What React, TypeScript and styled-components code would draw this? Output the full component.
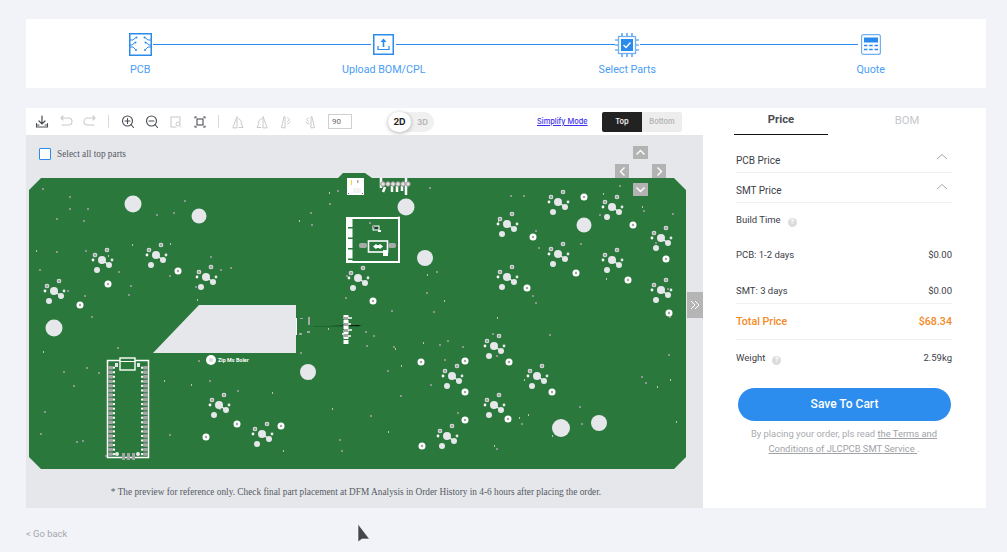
import React from "react";
import styled, { createGlobalStyle } from "styled-components";

const Global = createGlobalStyle`
  html, body { margin: 0; padding: 0; background: #f1f3f8; }
  body { font-family: Roboto, "Liberation Sans", sans-serif; overflow: hidden; }
  * { box-sizing: border-box; }
`;

const Page = styled.div`
  position: relative;
  width: 1007px;
  height: 552px;
  padding: 19px 21px 0 26px;
`;
const StepsCard = styled.div`
  height: 69px;
  background: #fff;
  display: grid;
  grid-template-columns: repeat(4, 243.5px);
  justify-content: center;
  padding-right: 1px;
  margin-bottom: 20px;
`;
const Step = styled.div<{ $last?: boolean }>`
  position: relative;
  display: flex;
  flex-direction: column;
  align-items: center;
  padding-top: 14px;
  &::before {
    content: "";
    display: ${(p) => (p.$last ? "none" : "block")};
    position: absolute;
    left: 50%;
    top: 25px;
    width: 243.5px;
    height: 1px;
    background: #2b8bec;
  }
`;
const StepIcon = styled.div`
  position: relative;
  z-index: 1;
  width: 25px;
  height: 23px;
  background: #fff;
  display: flex;
  align-items: center;
  justify-content: center;
`;
const StepLabel = styled.div`
  margin-top: 7px;
  font-size: 10.7px;
  line-height: 14px;
  color: #4a9df5;
`;
const Main = styled.div`
  display: flex;
  height: 400px;
`;
const Left = styled.div`
  width: 677px;
  display: flex;
  flex-direction: column;
`;
const Toolbar = styled.div`
  height: 27px;
  background: #fff;
  display: flex;
  align-items: center;
  padding-left: 4px;
`;
const ToolBtn = styled.div`
  width: 24px;
  flex: none;
  height: 16px;
  display: flex;
  align-items: center;
  justify-content: center;
`;
const ToolSep = styled.div`
  width: 1px;
  height: 13px;
  background: #d9d9d9;
  margin: 0 7px 0 6px;
  flex: none;
`;
const AngleInput = styled.div`
  width: 24px;
  height: 15px;
  margin-left: 6px;
  border: 1px solid #d0d0d0;
  font-size: 8px;
  line-height: 13px;
  padding-left: 3px;
  color: #666;
`;
const ViewToggle = styled.div`
  width: 46px;
  height: 20px;
  margin-left: 36px;
  border-radius: 10px;
  background: #f0f0f0;
  display: flex;
  align-items: center;
  font-family: Inter, sans-serif;
  font-weight: 700;
  font-size: 8px;
`;
const View2D = styled.div`
  width: 23px;
  height: 20px;
  border-radius: 10px;
  background: #fff;
  box-shadow: 0 1px 4px rgba(0, 0, 0, 0.3);
  color: #222;
  font-size: 9px;
  line-height: 20px;
  text-align: center;
`;
const View3D = styled.div`
  width: 23px;
  color: #b8b8b8;
  text-align: center;
`;
const SimplifyLink = styled.a`
  margin-left: 103px;
  width: 65px;
  font-family: Inter, sans-serif;
  font-weight: 500;
  font-size: 7.4px;
  color: #3a2fe8;
  text-decoration: underline;
  white-space: nowrap;
`;
const Side = styled.div`
  display: flex;
  height: 20px;
  border-radius: 2px;
  overflow: hidden;
  font-family: Inter, sans-serif;
  font-size: 7.4px;
  font-weight: 600;
  line-height: 20px;
  text-align: center;
`;
const SideBtn = styled.div<{ $on?: boolean }>`
  width: 40px;
  background: ${(p) => (p.$on ? "#222222" : "#ededed")};
  color: ${(p) => (p.$on ? "#eeeeee" : "#b5b5b5")};
`;
const Canvas = styled.div`
  position: relative;
  flex: 1;
  background: #e6e7eb;
  display: flex;
  flex-direction: column;
`;
const SelectRow = styled.div`
  height: 35px;
  display: flex;
  align-items: center;
  padding: 2px 0 0 13px;
  font-family: "Liberation Serif", serif;
  font-size: 9.3px;
  color: #555a63;
`;
const Check = styled.span`
  width: 12px;
  height: 12px;
  border: 1px solid #2b8bec;
  border-radius: 1px;
  background: #fff;
  margin-right: 6px;
`;
const BoardSvg = styled.svg`
  display: block;
  width: 677px;
  height: 300px;
  flex: none;
`;
const Note = styled.div`
  flex: 1;
  text-align: center;
  font-family: "Liberation Serif", serif;
  font-size: 9.3px;
  line-height: 14px;
  padding: 15px 17px 0 0;
  color: #555a63;
`;
const Arrow = styled.div<{ $x: number; $y: number; $w: number; $h: number }>`
  position: absolute;
  left: ${(p) => p.$x}px;
  top: ${(p) => p.$y}px;
  width: ${(p) => p.$w}px;
  height: ${(p) => p.$h}px;
  background: #b3b3b3;
  display: flex;
  align-items: center;
  justify-content: center;
`;
const Right = styled.div`
  position: relative;
  flex: 1;
  background: #fff;
  padding: 0 34px 0 33px;
`;
const Tabs = styled.div`
  display: flex;
  height: 27px;
  margin: 0 -34px 0 -2px;
`;
const Tab = styled.div<{ $on?: boolean }>`
  width: ${(p) => (p.$on ? "94px" : "158px")};
  text-align: center;
  height: ${(p) => (p.$on ? "27px" : "26px")};
  border-bottom: ${(p) => (p.$on ? "1px solid #111" : "none")};
  font-size: 11.3px;
  font-weight: ${(p) => (p.$on ? 700 : 400)};
  line-height: ${(p) => (p.$on ? "24px" : "26px")};
  color: ${(p) => (p.$on ? "#4a4d52" : "#c5c7ca")};
`;
const Row = styled.div<{ $h: number; $line?: boolean; $pt?: number }>`
  height: ${(p) => p.$h}px;
  padding-top: ${(p) => p.$pt ?? 0}px;
  display: flex;
  justify-content: space-between;
  align-items: flex-start;
  font-size: 9.5px;
  line-height: 14px;
  color: #3c4048;
  border-bottom: ${(p) => (p.$line ? "1px solid #eff0f3" : "none")};
`;
const AccordionRow = styled(Row)`
  font-size: 10px;
  svg {
    margin: -1px 4px 0 0;
  }
`;
const TotalRow = styled(Row)`
  font-size: 10.7px;
  font-weight: 500;
  color: #f58a26;
`;
const Help = styled.span`
  display: inline-block;
  width: 9px;
  height: 9px;
  margin-left: 7px;
  border-radius: 50%;
  background: #dcdcdc;
  color: #fff;
  font-size: 7px;
  font-weight: 700;
  line-height: 9px;
  text-align: center;
  vertical-align: -1px;
`;
const SaveBtn = styled.div`
  width: 213px;
  height: 33px;
  margin: 19px 0 0 2px;
  border-radius: 17px;
  background: #2d8dee;
  color: #fff;
  font-size: 12px;
  font-weight: 500;
  line-height: 33px;
  text-align: center;
`;
const Terms = styled.div`
  margin-top: 5px;
  text-align: center;
  font-size: 9.4px;
  line-height: 15px;
  color: #a9abaf;
  a {
    color: #a0a2a6;
    text-decoration: underline;
  }
`;
const Handle = styled.div`
  position: absolute;
  left: -16px;
  top: 184px;
  width: 16px;
  height: 26px;
  background: #b5b5b5;
  display: flex;
  align-items: center;
  justify-content: center;
`;
const Back = styled.div`
  margin-top: 20px;
  font-size: 9.4px;
  line-height: 12px;
  color: #a6a8ac;
`;
const Cursor = styled.svg`
  position: absolute;
  left: 356px;
  top: 522px;
`;

const B = "#2b8bec";
const PcbIcon = () => (
  <svg width="23" height="23" viewBox="0 0 23 23" fill="none" stroke={B} strokeWidth="1">
    <rect x=".75" y=".75" width="21.5" height="21.5" strokeWidth="1.5" />
    <path d="M1 7h3l3 -2.5M22 7h-3l-3 -2.5M1 14h3l3 3M22 14h-3l-3 3M1 12h2l3 -2.5M22 12h-2l-3 -2.5" />
    <g fill={B} stroke="none">
      <circle cx="7.5" cy="4.5" r="1" /><circle cx="15.5" cy="4.5" r="1" />
      <circle cx="7" cy="17" r="1" /><circle cx="16" cy="17" r="1" />
      <circle cx="6.5" cy="9.5" r="1" /><circle cx="16.5" cy="9.5" r="1" />
    </g>
  </svg>
);
const UploadIcon = () => (
  <svg width="21" height="21" viewBox="0 0 21 21" fill="none" stroke={B}>
    <rect x=".75" y=".75" width="19.5" height="19.5" strokeWidth="1.5" />
    <path d="M5 12v3.5h11V12" strokeWidth="1.2" />
    <path d="M10.5 13V7" strokeWidth="1.6" />
    <path d="M10.5 4.5L7.5 8h6z" fill={B} stroke="none" />
  </svg>
);
const ChipIcon = () => (
  <svg width="24" height="24" viewBox="0 0 24 24" fill="none">
    <rect x="3.5" y="3.5" width="17" height="17" stroke="#6fb0f3" strokeWidth="1.3" />
    <rect x="6" y="6" width="12" height="12" fill={B} />
    <path d="M8.5 12l2.5 2.5 4.5 -5" stroke="#fff" strokeWidth="1.3" />
    <path d="M7 0v3M12 0v3M17 0v3M7 21v3M12 21v3M17 21v3M0 7h3M0 12h3M0 17h3M21 7h3M21 12h3M21 17h3" stroke={B} strokeWidth="1.2" />
  </svg>
);
const CalcIcon = () => (
  <svg width="20" height="21" viewBox="0 0 20 21" fill="none">
    <rect x=".6" y=".6" width="18.8" height="19.8" rx="2" stroke="#6fb0f3" strokeWidth="1.2" />
    <rect x="3" y="3.5" width="14" height="5" fill={B} />
    <path d="M3 11.5h3.5M8.2 11.5h3.5M13.5 11.5h3.5M3 15.5h3.5M8.2 15.5h3.5M13.5 15.5h3.5" stroke={B} strokeWidth="1.4" />
  </svg>
);

const T = ({ children }: { children: React.ReactNode }) => (
  <svg width="16" height="14" viewBox="0 0 16 14" fill="none" strokeLinecap="round">{children}</svg>
);
const D = "#4a4d52";
const L = "#c9cacc";
const ToolIcons = {
  download: <T><path d="M8 1v7.5M5 6l3 3 3-3" stroke={D} strokeWidth="1.2" /><path d="M2.5 8.5v3.5h11V8.5M2.5 10h2.5M11 10h2.5" stroke={D} strokeWidth="1.1" /></T>,
  undo: <T><path d="M3 3h7.5a3.2 3.2 0 0 1 0 7H4M3 3l2-2M3 3l2 2" stroke={L} strokeWidth="1.1" /></T>,
  redo: <T><path d="M13 3H5.5a3.2 3.2 0 0 0 0 7H12M13 3l-2-2M13 3l-2 2" stroke={L} strokeWidth="1.1" /></T>,
  zoomIn: <T><circle cx="7.5" cy="6" r="5" stroke={D} strokeWidth="1.1" /><path d="M5 6h5M7.5 3.5v5M11 9.5l2.5 3" stroke={D} strokeWidth="1.1" /></T>,
  zoomOut: <T><circle cx="7.5" cy="6" r="5" stroke={D} strokeWidth="1.1" /><path d="M5 6h5M11 9.5l2.5 3" stroke={D} strokeWidth="1.1" /></T>,
  fit: <T><path d="M8 12H3V2h9v5" stroke={L} strokeWidth="1.1" /><circle cx="10" cy="9" r="2" stroke={L} /><path d="M11.5 10.5l1.5 1.5" stroke={L} /></T>,
  frame: <T><rect x="5" y="4" width="6" height="6" stroke={D} strokeWidth="1.1" /><path d="M3 3V2h1.5M11.5 2H13v1M13 11v1h-1.5M4.5 12H3v-1" stroke={D} strokeWidth="1.1" /></T>,
  rotA: <T><path d="M3 12.5L7 1.5v11zM9 12.5h4L11 8M8.5 3.5a7 7 0 0 1 3.5 4" stroke={L} /></T>,
  rotB: <T><path d="M13 12.5L9 1.5v11zM7 12.5H3L5 8M7.5 3.5a7 7 0 0 0-3.5 4" stroke={L} /></T>,
  mirA: <T><path d="M7 2v11L3.5 12.5 6 2zM9.5 3l2 1.5-2 2M9.5 9l2.5-2" stroke={L} /></T>,
  mirB: <T><path d="M9 2v11l3.5-.5L10 2zM6.5 3l-2 1.5 2 2M7 9a3 3 0 0 1-3-2" stroke={L} /></T>,
};

const Chev = ({ d }: { d: string }) => (
  <svg width="13" height="13" viewBox="0 0 13 13" fill="none" stroke="#fff" strokeWidth="1.4"><path d={d} /></svg>
);
const Up = () => (
  <svg width="12" height="8" viewBox="0 0 12 8" fill="none" stroke="#a8a8a8"><path d="M1 6l5-4.5L11 6" /></svg>
);

// ---------- PCB drawing data (page coordinates) ----------
const clusters: [number, number][] = [
  [558, 202], [612, 207], [507, 224], [661, 238], [558, 254], [612, 260], [507, 277], [661, 290],
  [102, 260], [156, 255], [54, 291], [206, 277], [358, 278],
  [219, 405], [262, 434], [452, 376], [494, 346], [537, 376], [494, 405], [447, 436],
];
const holes: [number, number, number][] = [
  [133, 204, 8.5], [199, 216, 7.5], [54, 328, 8.5], [406, 207, 8.5], [425, 258, 8], [584, 225, 7.5],
  [308, 372, 8], [561, 428, 9], [599, 423, 8],
];
const rings: [number, number][] = [
  [584, 197], [633, 225], [533, 237], [666, 259], [576, 273], [628, 280], [527, 288], [669, 313],
  [178, 271], [108, 284], [80, 305], [373, 301], [237, 424], [281, 426], [421, 362], [465, 361],
  [509, 362], [465, 392], [508, 419], [552, 392], [206, 437], [422, 446], [465, 420],
];
const dots: [number, number][] = (() => {
  const out: [number, number][] = [];
  let s = 17;
  const r = () => {
    s = (s * 16807) % 2147483647;
    return s / 2147483647;
  };
  while (out.length < 130) {
    const x = 36 + r() * 642;
    const y = 184 + r() * 278;
    if (y > 303 && y < 355 && x > 150 && x < 298) continue;
    if (x > 105 && x < 150 && y > 356 && y < 460) continue;
    out.push([Math.round(x), Math.round(y)]);
  }
  return out;
})();

const Cluster = ({ x, y }: { x: number; y: number }) => (
  <g transform={`translate(${x} ${y})`}>
    <path d="M0 0L7 5" stroke="#fff" strokeWidth="1.2" />
    <circle r="4" fill="#e6e7eb" />
    <circle cx="7" cy="5" r="3" fill="#e6e7eb" />
    <circle cx="-5" cy="10" r="3" fill="#e6e7eb" />
    <circle cx="5" cy="-10" r="2.3" fill="#e6e7eb" />
    <circle cx="5" cy="-10" r="1.5" fill="#a3a6a5" />
    <circle cx="-7" cy="-5" r="2.3" fill="#e6e7eb" />
    <circle cx="-7" cy="-5" r="1.5" fill="#a3a6a5" />
    <circle cx="-9" cy="0" r="1.4" fill="#fff" />
    <circle cx="10" cy="0" r="1.4" fill="#e6e7eb" />
  </g>
);

const pinRows = Array.from({ length: 20 }, (_, i) => 366 + i * 4.55);

const Board = () => (
  <BoardSvg viewBox="26 170 677 300">
    <path d="M41 178H338L343 173H365L372 178H674L686 190V457L674 469H41L29 457V190Z" fill="#2a783c" />
    {dots.map(([x, y], i) => (
      <rect key={i} x={x} y={y} width={i % 4 === 0 ? 1 : 2} height="2" fill={i % 4 === 0 ? "#b9c7b4" : "#8f9692"} />
    ))}
    <path d="M199 305H296V353H153Z" fill="#e6e7eb" />
    <path d="M296.5 318v17" stroke="#fff" />
    <path d="M313 326.5H358L362 325" stroke="#1d6630" strokeWidth="1" />
    {holes.map(([x, y, r], i) => <circle key={i} cx={x} cy={y} r={r} fill="#e6e7eb" />)}
    {clusters.map(([x, y], i) => <Cluster key={i} x={x} y={y} />)}
    {rings.map(([x, y], i) => (
      <g key={i}>
        <circle cx={x} cy={y} r="3.5" fill="#fff" />
        <circle cx={x} cy={y} r="1.2" fill="#9fa5a2" />
      </g>
    ))}

    {/* USB connector */}
    <rect x="347" y="178" width="17" height="17" fill="#fff" />
    <rect x="351" y="180" width="1" height="5" fill="#e8d83a" />
    <rect x="357" y="180" width="1.5" height="3" fill="#aaa" />
    <rect x="353" y="188" width="8" height="5" fill="#f2f2ee" />
    <rect x="348" y="193" width="1" height="1" fill="#e020d0" />
    <rect x="362" y="193" width="1" height="1" fill="#e020d0" />
    {/* header */}
    <path d="M381 178v10M385 187l-2 5M392 186v6M397 186v6M402 186v5M406 178v17" stroke="#fff" strokeWidth="2.5" />
    {[383, 388, 393, 398, 403, 408].map((x) => (
      <circle key={x} cx={x} cy="184" r="2.3" fill="#e2e2dc" stroke="#8f9490" strokeWidth="1" />
    ))}

    {/* module with big outline */}
    <rect x="347" y="218" width="52" height="44" fill="none" stroke="#fff" strokeWidth="2" />
    <path d="M350 218v44" stroke="#fff" strokeWidth="5" strokeDasharray="9 1.5" />
    <rect x="373" y="226" width="6" height="4" fill="#2a783c" stroke="#fff" />
    <rect x="375" y="227" width="3" height="2" fill="#333" />
    <rect x="373" y="226" width="1" height="1" fill="#e020d0" />
    <rect x="378" y="230" width="3" height="2" fill="#fff" />
    <rect x="368.5" y="241" width="19" height="11" fill="none" stroke="#fff" strokeWidth="1.6" />
    <rect x="383" y="250" width="5" height="6" fill="#fff" />
    <path d="M373 246.5l3-2.5 1 1 2 0 1-1 3 2.5-3 2.5-1-1-2 0-1 1z" fill="#fff" />
    <rect x="359" y="243" width="8" height="5" rx="2" fill="#a6aaa8" />
    <rect x="388" y="243" width="8" height="5" rx="2" fill="#a6aaa8" />

    {/* right-hand header next to cut-out */}
    <g fill="#a3a6a5">
      <rect x="308" y="317" width="2" height="8" />
      <rect x="307" y="331" width="3" height="2" />
      <rect x="299" y="333" width="3" height="2" />
      <rect x="300" y="318" width="3" height="1" />
    </g>
    <path d="M346 315v30" stroke="#fff" strokeWidth="5" strokeDasharray="4 1" />
    <path d="M346 318h6M346 324h5M346 330h6M346 336h5M342 334h4" stroke="#fff" strokeWidth="1.6" />
    {[317, 323, 329, 334].map((y) => <rect key={y} x="344" y={y} width="4" height="3" fill="#a3a6a5" />)}

    {/* silkscreen label */}
    <circle cx="211" cy="360" r="5" fill="#fff" />
    <circle cx="211" cy="360" r="2" fill="#d6dcd6" />
    <text x="218" y="362" fontFamily="Roboto, sans-serif" fontSize="5.4" fontWeight="700" fill="#fff">Zip Ms Boler</text>

    {/* controller module */}
    <rect x="107.5" y="360.5" width="41" height="97" fill="none" stroke="#fff" strokeWidth="1.5" />
    <rect x="120" y="358" width="15" height="12" fill="#2a783c" stroke="#fff" strokeWidth="1.4" />
    <rect x="120" y="361" width="15" height="1" fill="#fff" />
    <rect x="115" y="363" width="3" height="4" fill="#e6e7eb" />
    <rect x="137" y="363" width="3" height="4" fill="#e6e7eb" />
    {pinRows.map((y) => (
      <g key={y}>
        <rect x="108" y={y} width="5" height="3.4" rx="1" fill="#a3a6a5" />
        <rect x="113" y={y + 0.7} width="2" height="2" fill="#fff" />
        <rect x="143" y={y} width="5" height="3.4" rx="1" fill="#a3a6a5" />
        <rect x="141" y={y + 0.7} width="2" height="2" fill="#fff" />
      </g>
    ))}
    <circle cx="117" cy="454" r="2" fill="#e6e7eb" />
    <circle cx="138" cy="454" r="2" fill="#e6e7eb" />
    {[122, 127, 132].map((x) => <rect key={x} x={x} y="453" width="3" height="7" fill="#a3a6a5" />)}
  </BoardSvg>
);

export default function App() {
  return (
    <Page>
      <Global />
      <StepsCard>
        <Step><StepIcon><PcbIcon /></StepIcon><StepLabel>PCB</StepLabel></Step>
        <Step><StepIcon><UploadIcon /></StepIcon><StepLabel>Upload BOM/CPL</StepLabel></Step>
        <Step><StepIcon><ChipIcon /></StepIcon><StepLabel>Select Parts</StepLabel></Step>
        <Step $last><StepIcon><CalcIcon /></StepIcon><StepLabel>Quote</StepLabel></Step>
      </StepsCard>
      <Main>
        <Left>
          <Toolbar>
            <ToolBtn>{ToolIcons.download}</ToolBtn>
            <ToolBtn>{ToolIcons.undo}</ToolBtn>
            <ToolBtn>{ToolIcons.redo}</ToolBtn>
            <ToolSep />
            <ToolBtn>{ToolIcons.zoomIn}</ToolBtn>
            <ToolBtn>{ToolIcons.zoomOut}</ToolBtn>
            <ToolBtn>{ToolIcons.fit}</ToolBtn>
            <ToolBtn>{ToolIcons.frame}</ToolBtn>
            <ToolSep />
            <ToolBtn>{ToolIcons.rotA}</ToolBtn>
            <ToolBtn>{ToolIcons.rotB}</ToolBtn>
            <ToolBtn>{ToolIcons.mirA}</ToolBtn>
            <ToolBtn>{ToolIcons.mirB}</ToolBtn>
            <AngleInput>90</AngleInput>
            <ViewToggle><View2D>2D</View2D><View3D>3D</View3D></ViewToggle>
            <SimplifyLink>Simplify Mode</SimplifyLink>
            <Side><SideBtn $on>Top</SideBtn><SideBtn>Bottom</SideBtn></Side>
          </Toolbar>
          <Canvas>
            <SelectRow><Check />Select all top parts</SelectRow>
            <Board />
            <Note>* The preview for reference only. Check final part placement at DFM Analysis in Order History in 4-6 hours after placing the order.</Note>
            <Arrow $x={607} $y={11} $w={15} $h={13}><Chev d="M2.5 8.5l4-4 4 4" /></Arrow>
            <Arrow $x={589} $y={29} $w={14} $h={14}><Chev d="M8.5 2.5l-4 4 4 4" /></Arrow>
            <Arrow $x={626} $y={29} $w={14} $h={14}><Chev d="M4.5 2.5l4 4-4 4" /></Arrow>
            <Arrow $x={607} $y={48} $w={15} $h={13}><Chev d="M2.5 4.5l4 4 4-4" /></Arrow>
          </Canvas>
        </Left>
        <Right>
          <Handle>
            <svg width="12" height="12" viewBox="0 0 12 12" fill="none" stroke="#fff" strokeWidth="1">
              <path d="M2 2l4 4-4 4M6 2l4 4-4 4" />
            </svg>
          </Handle>
          <Tabs><Tab $on>Price</Tab><Tab>BOM</Tab></Tabs>
          <AccordionRow $h={38} $pt={19} $line>PCB Price<Up /></AccordionRow>
          <AccordionRow $h={30} $pt={11} $line>SMT Price<Up /></AccordionRow>
          <Row $h={35} $pt={10}><span>Build Time<Help>?</Help></span></Row>
          <Row $h={36} $pt={10}><span>PCB: 1-2 days</span><span>$0.00</span></Row>
          <Row $h={30} $pt={10} $line><span>SMT: 3 days</span><span>$0.00</span></Row>
          <TotalRow $h={36} $pt={11} $line><span>Total Price</span><span>$68.34</span></TotalRow>
          <Row $h={29} $pt={11}><span>Weight<Help>?</Help></span><span>2.59kg</span></Row>
          <SaveBtn>Save To Cart</SaveBtn>
          <Terms>
            By placing your order, pls read <a>the Terms and<br />Conditions of JLCPCB SMT Service </a>.
          </Terms>
        </Right>
      </Main>
      <Back>&lt; Go back</Back>
      <Cursor width="16" height="24" viewBox="0 0 16 24">
        <path d="M2 2l0 18 4-3 3 0 4.5 0z" fill="#43464c" stroke="#fff" strokeWidth=".6" />
      </Cursor>
    </Page>
  );
}
